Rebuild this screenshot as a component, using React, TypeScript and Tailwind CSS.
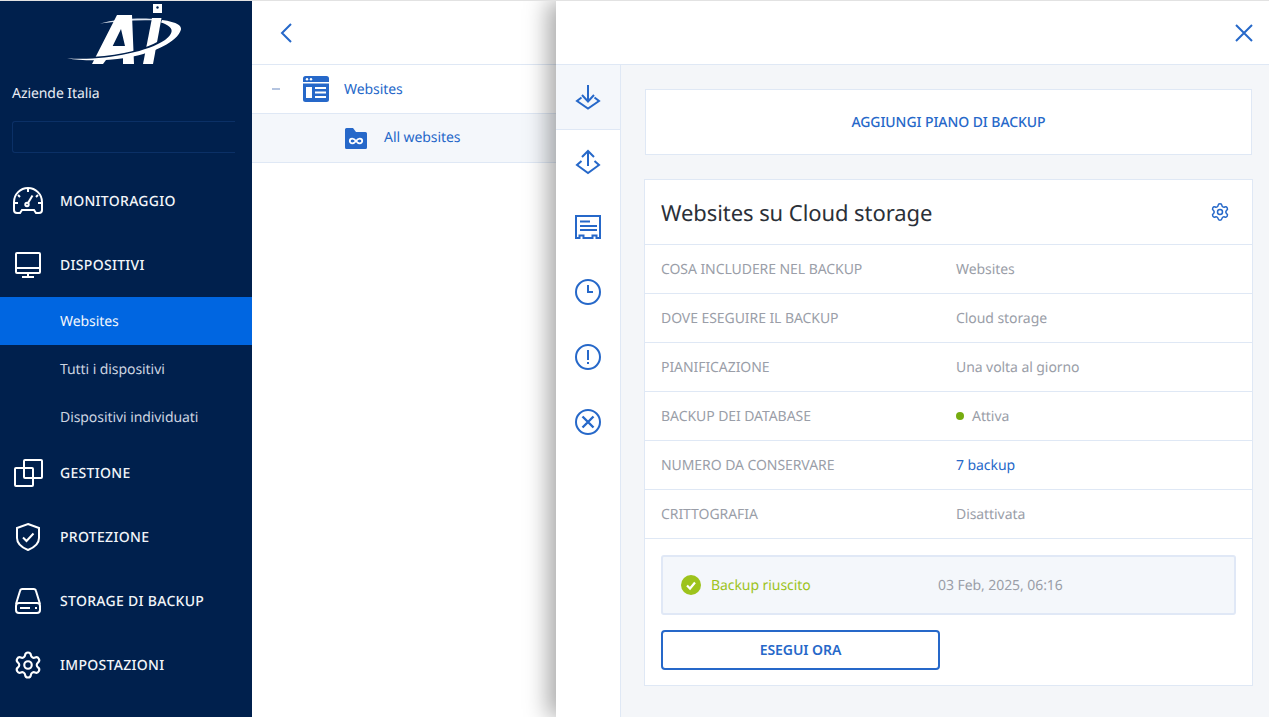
import { Settings } from "lucide-react";
import type { ReactNode } from "react";

const ROWS: { label: string; value: ReactNode }[] = [
  { label: "COSA INCLUDERE NEL BACKUP", value: "Websites" },
  { label: "DOVE ESEGUIRE IL BACKUP", value: "Cloud storage" },
  { label: "PIANIFICAZIONE", value: "Una volta al giorno" },
  {
    label: "BACKUP DEI DATABASE",
    value: (
      <span className="flex items-center gap-2">
        <span className="h-2 w-2 rounded-full bg-[#76ac0f]" />
        Attiva
      </span>
    ),
  },
  { label: "NUMERO DA CONSERVARE", value: <span className="text-[#2668c9]">7 backup</span> },
  { label: "CRITTOGRAFIA", value: "Disattivata" },
];

function Icon32({ children, className = "text-white" }: { children: ReactNode; className?: string }) {
  return (
    <svg viewBox="0 0 32 32" className={`h-8 w-8 shrink-0 ${className}`} fill="none" stroke="currentColor" strokeWidth="2">
      {children}
    </svg>
  );
}

function Logo() {
  return (
    <svg viewBox="66 2 118 62" className="ml-[66px] h-[62px] w-[118px]">
      <path d="M100 22.5C115 18 140 16.5 156 18L156 19.5C140 18.5 118 20 100 22.5Z" fill="#dfe6f0" />
      <path d="M92 63L117 14H132L134 63H123L123 55H109L103 63ZM112.7 45H125L121 28Z" fill="#fff" fillRule="evenodd" />
      <path d="M152 17H161.5L153 63H143Z" fill="#fff" />
      <path d="M153 3H162V12H153Z" fill="#fff" />
      <circle cx="157.5" cy="6.5" r="1.2" fill="#00204d" />
      <path d="M68 57C105 60 148 52 168 36" fill="none" stroke="#00204d" strokeWidth="3.5" />
      <path d="M67 57.2C100 60 146 52 165 39C174 32 175 26 161 21.5L162 19C177 21 184 25 180 31C174 43 150 53 125 57C105 60 82 60 67 57.2Z" fill="#fff" />
    </svg>
  );
}

function NavItem({ icon, label }: { icon: ReactNode; label: string }) {
  return (
    <div className="flex h-16 items-center gap-4 pl-3">
      {icon}
      <span className="text-[14px] font-medium tracking-[0.3px] text-[#f2f5f9]">{label}</span>
    </div>
  );
}

function Sidebar() {
  return (
    <aside className="flex w-[252px] shrink-0 flex-col bg-[#00204d]">
      <div className="pt-[2px]">
        <Logo />
      </div>
      <div className="pl-3 pt-[19px] text-[14px] leading-5 text-[#e8edf4]">Aziende Italia</div>
      <div className="ml-3 mt-[17px] h-8 w-[223px] rounded-l-[3px] border-y border-l border-[#0b3066]" />
      <div className="mt-4">
        <NavItem
          label="MONITORAGGIO"
          icon={
            <Icon32>
              <path d="M8 28H5a3 3 0 0 1-3-3v-8a14 14 0 0 1 28 0v8a3 3 0 0 1-3 3h-3l-2-3H10Z" />
              <path d="M16 4v3M6 10l2 2M26 10l-2 2M3 18h3M29 18h-3" />
              <path d="M20.5 10.5L16 18" />
              <circle cx="15" cy="19.5" r="1.7" />
            </Icon32>
          }
        />
        <NavItem
          label="DISPOSITIVI"
          icon={
            <Icon32>
              <rect x="4" y="4" width="24" height="20" rx="1" />
              <path d="M4 19h24M16 24v4M10 28h12" />
            </Icon32>
          }
        />
        <div className="flex h-12 items-center bg-[#0066e1] pl-[60px] text-[14px] text-[#f2f6fc]">Websites</div>
        <div className="flex h-12 items-center pl-[60px] text-[14px] text-[#ccd4e0]">Tutti i dispositivi</div>
        <div className="flex h-12 items-center pl-[60px] text-[14px] text-[#ccd4e0]">Dispositivi individuati</div>
        <NavItem
          label="GESTIONE"
          icon={
            <Icon32>
              <rect x="3" y="11" width="18" height="18" rx="1" />
              <rect x="12" y="3" width="18" height="18" rx="1" />
            </Icon32>
          }
        />
        <NavItem
          label="PROTEZIONE"
          icon={
            <Icon32>
              <path d="M16 3l11 4v10c0 6-6 10-11 12-5-2-11-6-11-12V7Z" />
              <path d="M11 16.5l3.5 3.5 7-7.5" />
            </Icon32>
          }
        />
        <NavItem
          label="STORAGE DI BACKUP"
          icon={
            <Icon32>
              <path d="M4 19L8 6a2.5 2.5 0 0 1 2.4-2h11.2A2.5 2.5 0 0 1 24 6l4 13" />
              <rect x="4" y="18" width="24" height="10" rx="3" />
              <path d="M8 23h10M23 23h2" />
            </Icon32>
          }
        />
        <NavItem
          label="IMPOSTAZIONI"
          icon={
            <div className="flex h-8 w-8 shrink-0 items-center justify-center">
              <Settings className="h-[30px] w-[30px] text-white" strokeWidth={1.7} />
            </div>
          }
        />
      </div>
    </aside>
  );
}

function TreeColumn() {
  return (
    <section className="w-[304px] shrink-0 bg-white">
      <div className="flex h-16 items-center border-b border-[#dfe8f5] pl-7">
        <svg viewBox="0 0 12 20" className="h-5 w-3 text-[#2668c9]" fill="none" stroke="currentColor" strokeWidth="2">
          <path d="M11 1L2 10l9 9" />
        </svg>
      </div>
      <div className="flex h-12 items-center pl-5">
        <span className="h-[2px] w-2 bg-[#b4c4e0]" />
        <svg viewBox="0 0 26 26" className="ml-[23px] h-[26px] w-[26px]">
          <path d="M2.5 0h21A2.5 2.5 0 0 1 26 2.5V6H0V2.5A2.5 2.5 0 0 1 2.5 0Z" fill="#2668c9" />
          <path d="M0 7.5h26V23.5A2.5 2.5 0 0 1 23.5 26H2.5A2.5 2.5 0 0 1 0 23.5Z" fill="#2668c9" />
          <circle cx="4" cy="3.2" r="1.2" fill="#fff" />
          <circle cx="8" cy="3.2" r="1.2" fill="#fff" />
          <rect x="3" y="11" width="6" height="11" fill="#fff" />
          <rect x="12" y="11" width="11" height="2" fill="#fff" />
          <rect x="12" y="15.5" width="11" height="2" fill="#fff" />
          <rect x="12" y="20" width="11" height="2" fill="#fff" />
        </svg>
        <span className="ml-[15px] text-[14px] text-[#2668c9]">Websites</span>
      </div>
      <div className="flex h-[50px] items-center border-y border-[#dfe8f5] bg-[#f4f7fb] pl-[93px]">
        <svg viewBox="0 0 22 21" className="h-[21px] w-[22px]">
          <path d="M1.5 0h6.5l3 4h9.5A1.5 1.5 0 0 1 22 5.5v14a1.5 1.5 0 0 1-1.5 1.5h-19A1.5 1.5 0 0 1 0 19.5v-18A1.5 1.5 0 0 1 1.5 0Z" fill="#2668c9" />
          <path d="M11 13c-1.2-1.6-2.4-2.4-3.8-2.4a2.4 2.4 0 0 0 0 4.8c1.4 0 2.6-.8 3.8-2.4c1.2-1.6 2.4-2.4 3.8-2.4a2.4 2.4 0 0 1 0 4.8c-1.4 0-2.6-.8-3.8-2.4Z" fill="none" stroke="#fff" strokeWidth="1.8" />
        </svg>
        <span className="mb-[2px] ml-[17px] text-[14px] text-[#2668c9]">All websites</span>
      </div>
    </section>
  );
}

function RailButton({ children, active }: { children: ReactNode; active?: boolean }) {
  return (
    <div className={`flex h-[65px] items-center justify-center ${active ? "border-b border-[#dfe8f5] bg-[#f4f7fb]" : "pb-px"}`}>
      <Icon32 className="text-[#2668c9]">{children}</Icon32>
    </div>
  );
}

function Rail() {
  return (
    <div className="w-[65px] shrink-0 border-r border-[#dfe8f5] bg-white">
      <RailButton active>
        <path d="M16 4v16M10 14l6 6.5 6-6.5" />
        <path d="M9.5 16.5L5 20l11 7.5L27 20l-4.5-3.5" />
      </RailButton>
      <RailButton>
        <path d="M16 5v15M10 11l6-6 6 6" />
        <path d="M9.5 15L5 19l11 8 11-8-4.5-4" />
      </RailButton>
      <RailButton>
        <path d="M4 27V5h24v22h-3.5v-2.5h-4V27h-9v-2.5h-4V27Z" />
        <path d="M8 10.5h10M8 15h17M8 19h17" />
      </RailButton>
      <RailButton>
        <circle cx="16" cy="16" r="12" />
        <path d="M16 9v7h5" />
      </RailButton>
      <RailButton>
        <circle cx="16" cy="16" r="12" />
        <path d="M16 9v10M16 21v2" />
      </RailButton>
      <RailButton>
        <circle cx="16" cy="16" r="12" />
        <path d="M10.5 10.5l11 11M21.5 10.5l-11 11" strokeWidth="2.4" />
      </RailButton>
    </div>
  );
}

function PlanCard() {
  return (
    <div className="mt-6 border border-[#dfe8f5] bg-white">
      <div className="flex h-16 items-center justify-between pl-4 pr-[22px]">
        <h2 className="pt-[2px] text-[22px] text-[#2b3038]">Websites su Cloud storage</h2>
        <Settings className="h-5 w-5 text-[#2668c9]" strokeWidth={1.8} />
      </div>
      {ROWS.map((row) => (
        <div key={row.label} className="flex h-[49px] items-center border-t border-[#dfe8f5] pl-4 text-[14px] text-[#9a9ea8]">
          <span className="w-[295px]">{row.label}</span>
          {row.value}
        </div>
      ))}
      <div className="border-t border-[#dfe8f5] px-4 pb-[15px] pt-4">
        <div className="flex h-[60px] items-center rounded-[3px] border-2 border-[#e0e8f6] bg-[#f4f7fb] pl-[18px] text-[14px]">
          <svg viewBox="0 0 20 20" className="h-5 w-5">
            <circle cx="10" cy="10" r="10" fill="#9dc31c" />
            <path d="M6 10.5l3 3 5-6" fill="none" stroke="#fff" strokeWidth="2.2" />
          </svg>
          <span className="ml-[10px] w-[227px] text-[#9dc31c]">Backup riuscito</span>
          <span className="text-[#9a9ea8]">03 Feb, 2025, 06:16</span>
        </div>
        <button className="mt-[15px] flex h-10 w-[279px] items-center justify-center rounded-[4px] border-2 border-[#2668c9] pb-[2px] text-[14px] font-semibold text-[#2668c9]">
          ESEGUI ORA
        </button>
      </div>
    </div>
  );
}

function DetailPanel() {
  return (
    <section className="relative z-10 flex min-w-0 flex-1 flex-col bg-white shadow-[-8px_0_22px_rgba(0,0,0,0.34)]">
      <div className="flex h-16 shrink-0 items-center justify-end border-b border-[#dfe8f5] pr-[15px]">
        <svg viewBox="0 0 20 20" className="h-5 w-5 text-[#2668c9]" fill="none" stroke="currentColor" strokeWidth="2">
          <path d="M2 2l16 16M18 2L2 18" />
        </svg>
      </div>
      <div className="flex min-h-0 flex-1">
        <Rail />
        <div className="flex-1 bg-[#f4f6f9] pl-[23px] pr-4 pt-6">
          <div className="mx-px flex h-[66px] items-center justify-center border border-[#dfe8f5] bg-white text-[14px] font-medium text-[#2668c9]">
            AGGIUNGI PIANO DI BACKUP
          </div>
          <PlanCard />
        </div>
      </div>
    </section>
  );
}

export default function App() {
  return (
    <div className="h-screen overflow-hidden border-t border-[#e2e2e2] font-['Noto_Sans',sans-serif] tracking-[-0.07px] [text-rendering:geometricPrecision]">
      <div className="flex h-full">
        <Sidebar />
        <TreeColumn />
        <DetailPanel />
      </div>
    </div>
  );
}
